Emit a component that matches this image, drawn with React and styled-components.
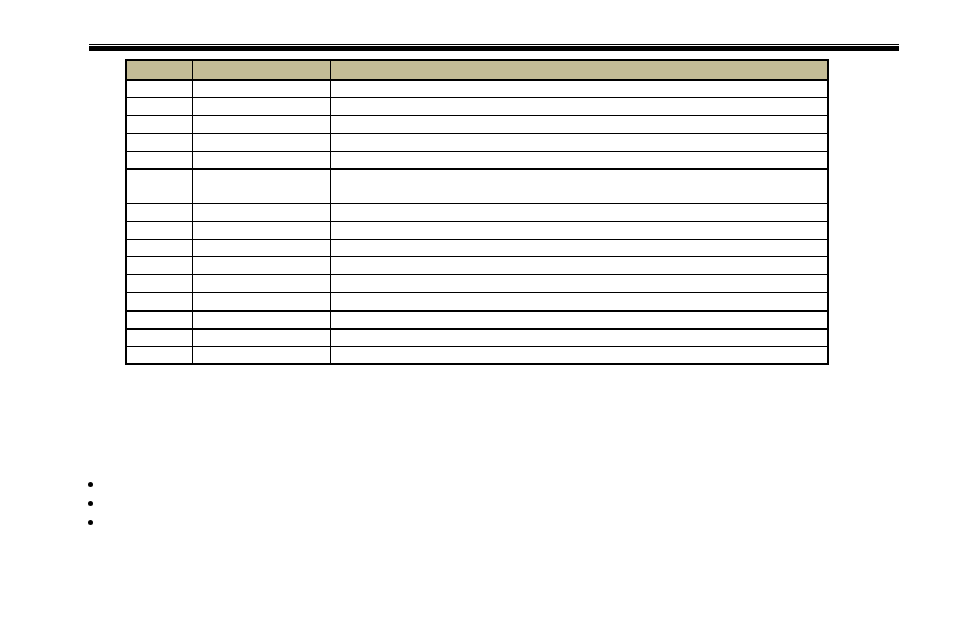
import styled, { createGlobalStyle } from 'styled-components';

const GlobalStyle = createGlobalStyle`
  body {
    margin: 0;
    background: #ffffff;
    font-family: "Liberation Sans", Arial, sans-serif;
  }
`;

// STYLED COMPONENTS
const Page = styled.div`
  width: 954px;
  height: 636px;
  padding-top: 44px;
  box-sizing: border-box;
  display: flex;
  flex-direction: column;
`;
const ThinRule = styled.div`
  margin-left: 89px;
  width: 810px;
  height: 1px;
  margin-bottom: 1px;
  background: #000;
`;
const ThickRule = styled.div`
  margin-left: 89px;
  width: 810px;
  height: 5px;
  background: #000;
`;
const Table = styled.div`
  margin-top: 8px;
  margin-left: 125px;
  width: 704px;
  border: 2px solid #000;
  box-sizing: border-box;
  display: flex;
  flex-direction: column;
`;
const Row = styled.div`
  display: grid;
  grid-template-columns: 65px 138px 1fr;
  height: ${(p) => p.$h}px;
  box-sizing: border-box;
  border-top: ${(p) => (p.$first ? 'none' : p.$thick ? '2px solid #000' : '1px solid #000')};
  background: ${(p) => (p.$head ? '#c4bc96' : '#fff')};
`;
const Cell = styled.div`
  border-left: 1px solid #000;
  font-size: 11px;
  &:first-child {
    border-left: none;
  }
`;
const BulletList = styled.ul`
  list-style: none;
  margin: 110px 0 0 0;
  padding: 0 0 0 88px;
  display: flex;
  flex-direction: column;
`;
const Bullet = styled.li`
  height: 19px;
  display: flex;
  align-items: center;
  &::before {
    content: '';
    width: 5px;
    height: 5px;
    border-radius: 50%;
    background: #000;
  }
`;

const rows = [
  { h: 18, thick: true },
  { h: 18 },
  { h: 18 },
  { h: 18 },
  { h: 17 },
  { h: 35, thick: true },
  { h: 18 },
  { h: 18 },
  { h: 17 },
  { h: 18 },
  { h: 18 },
  { h: 18 },
  { h: 18, thick: true },
  { h: 18, thick: true },
  { h: 17 },
];

function App() {
  return (
    <>
      <GlobalStyle />
      <Page>
        <ThinRule />
        <ThickRule />
        <Table>
          <Row $head $first $h={18}>
            <Cell />
            <Cell />
            <Cell />
          </Row>
          {rows.map((r, i) => (
            <Row key={i} $h={r.h} $thick={r.thick}>
              <Cell />
              <Cell />
              <Cell />
            </Row>
          ))}
        </Table>
        <BulletList>
          <Bullet />
          <Bullet />
          <Bullet />
        </BulletList>
      </Page>
    </>
  );
}
export default App;
